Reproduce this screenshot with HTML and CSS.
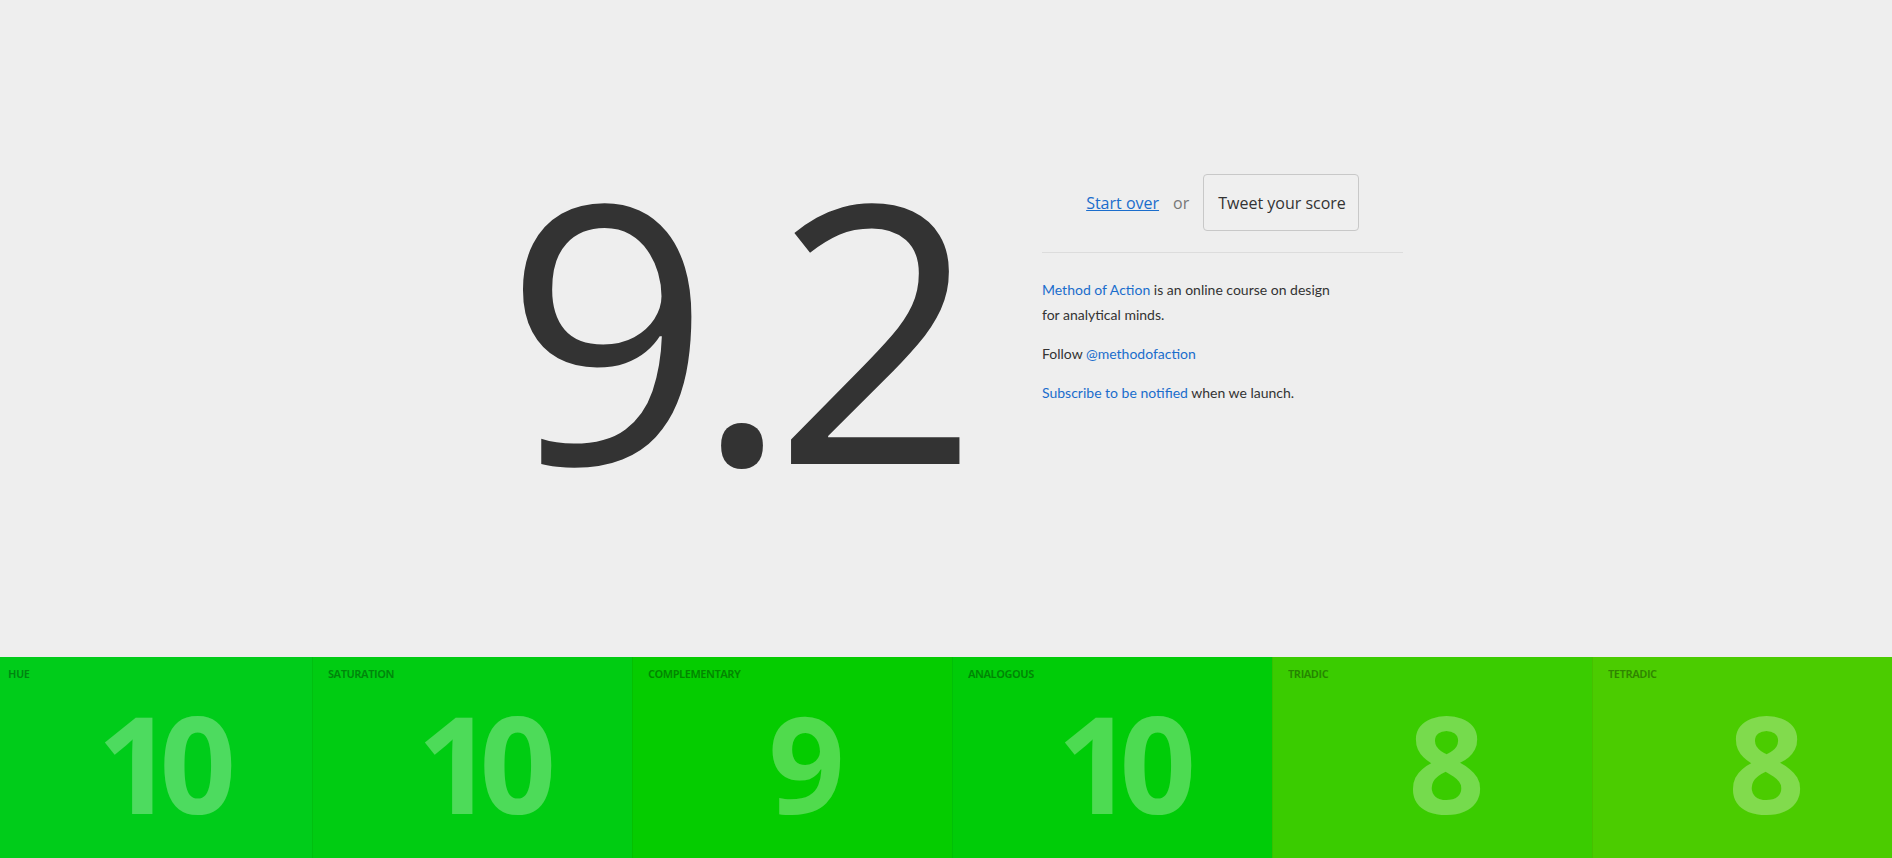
FILE: index.html
```html
<!DOCTYPE html>
<html lang="en">
<head>
    <meta charset="UTF-8">
    <meta name="viewport" content="width=device-width, initial-scale=1.0">
    <title>Color Score</title>
    <link rel="stylesheet" href="styles.css">
</head>
<body>
    <main class="result">
        <div class="score">9.2</div>

        <aside class="side">
            <div class="actions">
                <a href="#" class="restart">Start over</a>
                <span class="or">or</span>
                <button type="button" class="tweet">Tweet your score</button>
            </div>

            <div class="about">
                <p><a href="#">Method of Action</a> is an online course on design for analytical minds.</p>
                <p>Follow <a href="#">@methodofaction</a></p>
                <p><a href="#">Subscribe to be notified</a> when we launch.</p>
            </div>
        </aside>
    </main>

    <!-- Score per harmony rule -->
    <ul class="breakdown">
        <li class="tile tile-hue">
            <span class="label">Hue</span>
            <span class="value">10</span>
        </li>
        <li class="tile tile-saturation">
            <span class="label">Saturation</span>
            <span class="value">10</span>
        </li>
        <li class="tile tile-complementary">
            <span class="label">Complementary</span>
            <span class="value">9</span>
        </li>
        <li class="tile tile-analogous">
            <span class="label">Analogous</span>
            <span class="value">10</span>
        </li>
        <li class="tile tile-triadic">
            <span class="label">Triadic</span>
            <span class="value">8</span>
        </li>
        <li class="tile tile-tetradic">
            <span class="label">Tetradic</span>
            <span class="value">8</span>
        </li>
    </ul>
</body>
</html>
```

FILE: styles.css
```css
:root {
    --background: #eeeeee;
    --text: #333333;
    --link: #1a6dcc;
}

* {
    box-sizing: border-box;
    margin: 0;
    padding: 0;
}

body {
    background: var(--background);
    color: var(--text);
    font-family: 'Open Sans', sans-serif;
    height: 858px;
    overflow: hidden;
}

a {
    color: var(--link);
    text-decoration: none;
}

.result {
    height: 657px;
    display: flex;
    justify-content: center;
    align-items: flex-start;
}

.score {
    width: 520px;
    margin-top: 144px;
    padding-right: 30px;
    font-size: 360px;
    line-height: 1;
    letter-spacing: -16px;
    text-align: center;
    color: #333;
}

.side {
    width: 361px;
    margin-top: 174px;
    margin-left: 33px;
}

.actions {
    display: flex;
    align-items: center;
    justify-content: center;
    gap: 14px;
    padding-bottom: 21px;
    border-bottom: 1px solid #dcdcdc;
    font-size: 16px;
}

.restart {
    text-decoration: underline;
}

.or {
    color: #777;
}

.tweet {
    height: 57px;
    padding: 0 12px 0 14px;
    background: #efefef;
    border: 1px solid #c8c8c8;
    border-radius: 4px;
    font-family: inherit;
    font-size: 16px;
    color: #333;
    cursor: pointer;
}

.about {
    padding-top: 24px;
    font-family: 'Lato', sans-serif;
    font-size: 14px;
    line-height: 25px;
}

.about p {
    max-width: 295px;
    margin-bottom: 14px;
}

/* bottom strip */

.breakdown {
    display: flex;
    list-style: none;
    margin-left: -8px;
}

.tile {
    flex: 0 0 320px;
    height: 201px;
    padding: 11px 15px 0;
    border-left: 1px solid rgba(0, 0, 0, 0.06);
}

.label {
    display: block;
    font-size: 11px;
    line-height: 12px;
    font-weight: 700;
    text-transform: uppercase;
    letter-spacing: -0.5px;
    color: rgba(0, 0, 0, 0.35);
}

.value {
    display: block;
    margin-top: 15px;
    padding-left: 14px;
    font-size: 134px;
    line-height: 134px;
    font-weight: 700;
    letter-spacing: -14px;
    text-align: center;
    color: rgba(255, 255, 255, 0.3);
}

.tile-hue { background: #00cc1a; }
.tile-saturation { background: #00cc12; }
.tile-complementary { background: #05cc00; }
.tile-analogous { background: #00cc08; }
.tile-triadic { background: #3acc00; }
.tile-tetradic { background: #4bcc00; }
```
